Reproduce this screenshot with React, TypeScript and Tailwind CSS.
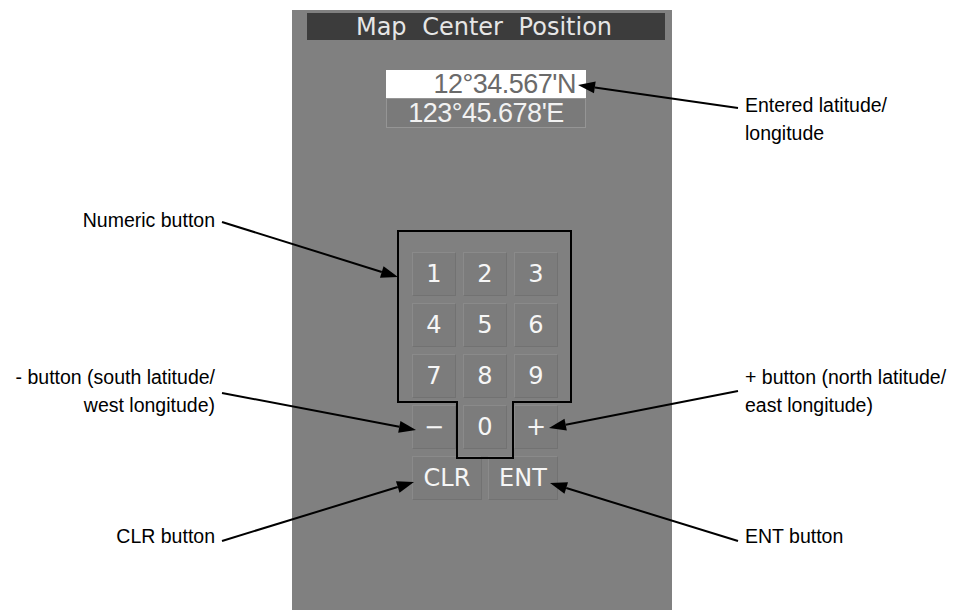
import React from 'react';

const keys = ['1', '2', '3', '4', '5', '6', '7', '8', '9', '−', '0', '+'];

const Key: React.FC<{ label: string; wide?: boolean }> = ({ label, wide }) => (
    <div
        className={`${wide ? 'w-[70px]' : 'w-[44px]'} h-[44px] flex items-center justify-center bg-[#7c7c7c] border border-[#8a8a8a] border-b-[#727272] border-r-[#727272] text-[#f6f6f6] text-[24px] leading-none`}
        style={{ fontFamily: '"DejaVu Sans", sans-serif' }}
    >
        {label}
    </div>
);

type Callout = { lines: string[]; top: number; side: 'left' | 'right' };

const callouts: Callout[] = [
    { lines: ['Numeric button'], top: 206, side: 'left' },
    { lines: ['- button (south latitude/', 'west longitude)'], top: 363, side: 'left' },
    { lines: ['CLR button'], top: 522, side: 'left' },
    { lines: ['Entered latitude/', 'longitude'], top: 91, side: 'right' },
    { lines: ['+ button (north latitude/', 'east longitude)'], top: 363, side: 'right' },
    { lines: ['ENT button'], top: 522, side: 'right' },
];

// arrow: from label end to tip
const arrows = [
    { x1: 222, y1: 222, x2: 398, y2: 277 },
    { x1: 222, y1: 393, x2: 416, y2: 430 },
    { x1: 222, y1: 541, x2: 414, y2: 482 },
    { x1: 738, y1: 108, x2: 578, y2: 85 },
    { x1: 738, y1: 391, x2: 549, y2: 428 },
    { x1: 738, y1: 541, x2: 550, y2: 483 },
];

const Arrow: React.FC<{ x1: number; y1: number; x2: number; y2: number }> = ({ x1, y1, x2, y2 }) => {
    const a = Math.atan2(y2 - y1, x2 - x1);
    const len = 17;
    const half = 6;
    const bx = x2 - len * Math.cos(a);
    const by = y2 - len * Math.sin(a);
    const px = -Math.sin(a) * half;
    const py = Math.cos(a) * half;
    return (
        <g>
            <line x1={x1} y1={y1} x2={bx} y2={by} stroke="black" strokeWidth={2} />
            <polygon points={`${x2},${y2} ${bx + px},${by + py} ${bx - px},${by - py}`} fill="black" />
        </g>
    );
};

export default function App() {
    return (
        <div className="relative w-[955px] h-[610px] bg-white overflow-hidden" style={{ fontFamily: '"Liberation Sans", Arial, sans-serif' }}>
            {/* panel */}
            <div className="ml-[292px] mt-[10px] w-[380px] h-[600px] bg-[#808080] flex flex-col pt-[3px]">
                <div
                    className="ml-[15px] w-[358px] h-[27px] bg-[#3c3c3c] flex items-center justify-center pr-[4px] text-[#e6e6e6] text-[24px] leading-none"
                    style={{ fontFamily: '"DejaVu Sans", sans-serif' }}
                >
                    <span className="[word-spacing:8px]">Map Center Position</span>
                </div>

                <div className="ml-[94px] mt-[30px] w-[200px] flex flex-col">
                    <div className="h-[28px] bg-white flex items-center justify-end pr-[10px] text-[#6a6a6a] text-[27px] tracking-[-0.5px] leading-none">
                        12°34.567'N
                    </div>
                    <div className="h-[30px] bg-[#7a7a7a] border border-[#959595] flex items-center justify-center text-[#f2f2f2] text-[27px] tracking-[-0.5px] leading-none">
                        123°45.678'E
                    </div>
                </div>

                <div className="ml-[120px] mt-[124px] flex flex-col gap-[7px] w-[146px]">
                    <div className="grid grid-cols-3 gap-x-[7px] gap-y-[7px]">
                        {keys.map(k => (
                            <Key key={k} label={k} />
                        ))}
                    </div>
                    <div className="flex gap-[6px]">
                        <Key label="CLR" wide />
                        <Key label="ENT" wide />
                    </div>
                </div>
            </div>

            {/* annotations */}
            <svg className="absolute inset-0 pointer-events-none" width={955} height={610}>
                <path d="M398,231 H571 V402 H513 V458 H457 V402 H398 Z" fill="none" stroke="black" strokeWidth={2} />
                {arrows.map((a, i) => (
                    <Arrow key={i} {...a} />
                ))}
            </svg>

            {callouts.map((c, i) => (
                <div
                    key={i}
                    className={`absolute text-[19.5px] leading-[28px] text-black ${c.side === 'left' ? 'right-[740px] text-right' : 'left-[745px] text-left'}`}
                    style={{ top: c.top }}
                >
                    {c.lines.map(l => (
                        <div key={l} className="whitespace-nowrap">{l}</div>
                    ))}
                </div>
            ))}
        </div>
    );
}
